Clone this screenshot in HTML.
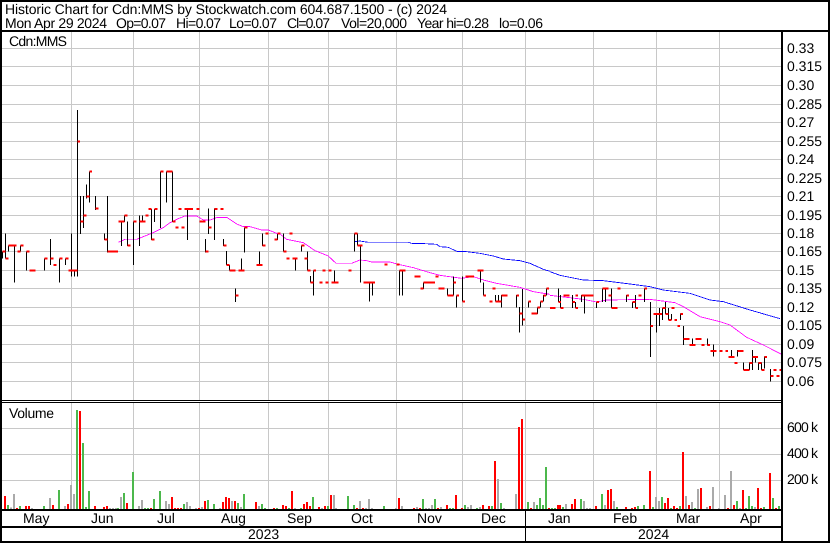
<!DOCTYPE html>
<html>
<head>
<meta charset="utf-8">
<style>
html,body{margin:0;padding:0;background:#fff;width:830px;height:543px;overflow:hidden}
svg{display:block}
text{font-family:"Liberation Sans",Arial,sans-serif;font-size:14px;fill:#000}
</style>
</head>
<body>
<svg width="830" height="543" viewBox="0 0 830 543" xmlns="http://www.w3.org/2000/svg" shape-rendering="crispEdges">
<rect width="830" height="543" fill="#fff"/>
<!-- grid -->
<path fill="none" stroke="#c8c8c8" stroke-width="1" d="M71.5 32V400M133.5 32V400M199.5 32V400M268.5 32V400M328.5 32V400M396.5 32V400M462.5 32V400M525.5 32V400M593.5 32V400M656.5 32V400M719.5 32V400M71.5 403V509M133.5 403V509M199.5 403V509M268.5 403V509M328.5 403V509M396.5 403V509M462.5 403V509M525.5 403V509M593.5 403V509M656.5 403V509M719.5 403V509M2 48.5H781M2 66.5H781M2 85.5H781M2 104.5H781M2 122.5H781M2 141.5H781M2 159.5H781M2 178.5H781M2 196.5H781M2 215.5H781M2 233.5H781M2 251.5H781M2 270.5H781M2 288.5H781M2 307.5H781M2 325.5H781M2 344.5H781M2 362.5H781M2 381.5H781M2 428.5H781M2 454.5H781M2 480.5H781"/>

<!-- volume bars, zoom 1 -->
<g transform="translate(0,400) scale(.333333)" fill="none" stroke-width="6">
<path stroke="#ff0000" d="M15 288V328M51 324V328M78 318V328M87 318V328M159 315V328M204 312V328M240 33V328M285 318V328M312 321V328M321 318V328M381 309V328M453 324V328M516 291V328M525 324V328M534 324V328M543 324V328M597 324V328M615 303V328M669 306V328M678 291V328M687 294V328M705 303V328M768 306V328M822 324V328"/>
<path stroke="#4cb84c" d="M24 315V328M60 318V328M132 318V328M177 270V328M231 30V328M249 129V328M258 321V328M267 273V328M354 324V328M372 279V328M399 216V328M435 324V328M444 324V328M462 297V328M480 273V328M552 312V328M624 300V328M642 312V328M714 309V328M732 282V328M786 312V328M795 324V328M831 324V328"/>
<path stroke="#aaaaaa" d="M33 323V328M42 282V328M96 324V328M150 294V328M195 318V328M213 255V328M222 282V328M330 324V328M339 324V328M348 324V328M363 291V328M417 318V328M426 300V328M498 303V328M507 312V328M561 306V328M570 318V328M588 324V328M606 321V328M660 324V328M696 303V328M723 321V328M777 318V328"/>
</g>
<!-- volume bars, zoom 2 -->
<g transform="translate(280,400) scale(.333333)" fill="none" stroke-width="6">
<path stroke="#ff0000" d="M9 315V328M18 318V328M36 273V328M72 312V328M81 306V328M90 318V328M117 321V328M135 318V328M153 285V328M231 324V328M249 324V328M357 294V328M402 324V328M420 324V328M474 324V328M501 315V328M528 285V328M546 324V328M609 315V328M627 318V328M645 183V328M717 81V328M726 57V328M753 324V328M807 324V328M834 315V328"/>
<path stroke="#4cb84c" d="M27 324V328M63 324V328M99 291V328M144 318V328M204 288V328M222 315V328M312 318V328M429 297V328M465 297V328M510 324V328M519 324V328M555 315V328M591 324V328M636 318V328M663 309V328M744 306V328M771 315V328M780 294V328M789 315V328M798 201V328M816 324V328M825 324V328"/>
<path stroke="#aaaaaa" d="M45 324V328M126 324V328M162 285V328M168 324V328M240 303V328M258 324V328M267 297V328M276 324V328M348 324V328M366 318V328M411 321V328M438 324V328M447 324V328M456 315V328M483 321V328M564 321V328M573 315V328M600 321V328M654 237V328M672 324V328M708 282V328M762 306V328"/>
</g>
<!-- volume bars, zoom 3 -->
<g transform="translate(550,400) scale(.333333)" fill="none" stroke-width="6">
<path stroke="#ff0000" d="M30 315V328M66 312V328M75 297V328M138 318V328M174 270V328M183 267V328M228 321V328M246 324V328M255 321V328M300 213V328M345 309V328M354 294V328M372 318V328M381 324V328M399 156V328M417 315V328M453 264V328M480 318V328M534 324V328M552 315V328M579 270V328M624 264V328M633 324V328M660 219V328M678 324V328"/>
<path stroke="#4cb84c" d="M39 321V328M93 297V328M156 282V328M201 321V328M264 318V328M282 315V328M309 321V328M336 291V328M363 324V328M390 318V328M435 324V328M561 303V328M588 324V328M597 288V328M606 318V328M642 321V328M669 294V328M687 318V328"/>
<path stroke="#aaaaaa" d="M48 312V328M102 303V328M111 324V328M120 324V328M165 315V328M192 303V328M318 291V328M327 303V328M408 288V328M426 306V328M444 267V328M471 321V328M489 261V328M507 324V328M525 285V328M543 213V328M570 324V328M615 321V328"/>
</g>

<!-- price section 1 -->
<g transform="translate(0,130) scale(.333333)" fill="none">
<path stroke="#ff00ff" stroke-width="2.5" d="M355 337L375 328L410 328L430 320L460 308L490 293L510 278L530 268L555 258L590 258L610 270L630 270L650 263L680 262L710 282L730 290L750 290L785 300L805 300L835 312"/>
<path stroke="#000" stroke-width="3" d="M7.5 364V386M16.5 310V385M25.5 347V365M43.5 347V458M61.5 347V365M79.5 365V422M133.5 385V422M151.5 327V405M178.5 385V458M196.5 385V405M214.5 310V440M223.5 422V440M232.5 -60V440M241.5 198V312M250.5 198V294M259.5 163V205M268.5 125V218M286.5 198V240M313.5 310V330M322.5 198V367M364.5 275V348M373.5 256V276M382.5 274V348M400.5 275V405M418.5 256V348M427.5 256V276M454.5 237V330M463.5 237V276M481.5 125V294M499.5 125V218M517.5 125V276M562.5 237V330M616.5 327V367M625.5 235V312M643.5 235V330M670.5 327V348M679.5 363V405M688.5 405V422M706.5 475V516M724.5 385V422M733.5 292V367M778.5 364V405M787.5 310V348M832.5 312V330"/>
<path stroke="#ff0000" stroke-width="6" d="M8 365h9M16 386h9M25 347h24M52 365h9M61 347h9M80 365h9M88 422h18M133 385h9M152 385h9M160 405h9M178 385h9M196 385h9M205 422h27M233 35h7M242 275h9M250 257h9M259 200h9M268 125h8M286 236h9M313 329h9M322 365h32M355 275h18M373 257h9M382 347h9M400 275h9M418 275h18M436 257h9M445 237h10M454 329h9M463 237h9M481 125h9M499 125h18M517 275h9M526 293h9M535 237h9M544 293h9M553 237h26M589 237h9M598 275h18M616 365h9M625 293h9M643 237h9M661 237h9M670 347h9M679 405h9M688 422h18M706 497h9M715 422h18M733 293h9M769 405h18M787 347h9M796 311h9M823 329h9M832 311h9"/>
</g>
<!-- price section 2 -->
<g transform="translate(280,200) scale(.333333)" fill="none">
<path stroke="#ff00ff" stroke-width="2.5" d="M0 102L20 118L70 128L105 152L145 168L168 190L215 190L240 180L260 182L275 186L330 186L355 193L400 203L450 218L480 226L545 235L580 230L610 240L650 250L720 262L760 275L810 283"/>
<path stroke="#0000ff" stroke-width="2.5" d="M223 125L240 123L265 127L385 127L395 130L435 131L470 133L480 140L505 142L530 154L560 155L600 160L640 168L670 177L720 182L750 190L790 208L810 214"/>
<path stroke="#000" stroke-width="3" d="M10.5 100V155M64.5 137V155M82.5 155V212M46.5 176V212M91.5 228V248M100.5 212V287M163.5 212V248M223.5 100V155M232.5 100V137M241.5 137V248M268.5 248V305M277.5 248V287M358.5 212V287M367.5 212V287M430.5 248V267M502.5 265V287M520.5 230V287M529.5 287V323M547.5 230V305M601.5 212V248M610.5 248V287M646.5 285V305M655.5 285V305M664.5 285V323M709.5 285V323M718.5 321V398M727.5 267V377M745.5 305V323M772.5 323V342M781.5 305V323M790.5 285V305M799.5 265V287"/>
<path stroke="#ff0000" stroke-width="6" d="M28 101h9M10 155h9M19 176h9M37 176h16M73 176h9M64 137h9M82 212h9M100 212h8M127 212h9M145 212h9M91 248h9M118 248h9M136 248h9M154 248h22M205 212h9M223 101h9M232 137h16M250 248h35M313 194h9M349 194h9M358 212h18M403 230h18M421 266h9M430 248h35M466 230h9M475 266h18M502 287h18M520 248h8M529 287h8M547 305h8M556 230h26M592 212h18M610 287h8M628 305h9M637 266h9M646 305h18M664 287h18M709 287h8M718 341h9M727 359h8M745 305h8M754 341h18M772 323h8M781 305h8M790 287h8M799 266h8"/>
</g>
<!-- price section 3 -->
<g transform="translate(550,260) scale(.333333)" fill="none">
<path stroke="#ff00ff" stroke-width="2.5" d="M0 106L50 112L100 118L140 126L170 120L300 118L330 122L375 128L400 140L450 170L510 185L540 195L590 232L640 255L695 283"/>
<path stroke="#0000ff" stroke-width="2.5" d="M0 35L30 46L100 60L160 62L240 72L300 80L340 90L420 100L480 120L520 125L600 150L690 176"/>
<path stroke="#000" stroke-width="3" d="M25.5 85V126M31.5 105V144M67.5 105V144M76.5 126V144M94.5 105V126M103.5 105V160M139.5 126V144M157.5 85V126M166.5 85V126M184.5 85V144M229.5 105V126M247.5 126V144M256.5 105V144M283.5 85V126M301.5 126V291M319.5 160V218M328.5 144V198M337.5 144V180M346.5 126V162M355.5 144V180M364.5 162V180M391.5 160V180M400.5 198V255M427.5 235V257M472.5 235V257M490.5 253V290M544.5 270V290M562.5 270V290M580.5 307V330M598.5 307V330M607.5 270V330M616.5 290V308M625.5 307V330M634.5 307V330M643.5 290V326M661.5 327V365"/>
<path stroke="#ff0000" stroke-width="6" d="M0 144h16M25 126h8M32 144h8M40 107h18M67 126h8M76 144h8M76 107h8M94 107h36M139 126h8M157 86h18M175 107h9M184 144h18M202 86h9M229 107h8M247 126h9M256 144h8M265 107h9M283 86h8M301 198h8M310 162h26M337 144h9M346 162h9M355 180h9M364 144h9M373 180h8M391 162h8M382 198h8M400 237h18M418 255h18M436 237h18M454 255h9M472 255h8M481 273h18M508 273h9M526 273h8M535 291h18M553 309h9M562 273h18M580 330h18M598 309h9M607 291h9M616 291h8M625 309h9M634 330h9M643 291h8M661 348h9M670 330h9M679 348h9M688 330h9"/>
</g>

<!-- frame -->
<path fill="#000" d="M0 0H830V2H0ZM0 30H830V32H0ZM0 0H2V543H0ZM828 0H830V543H828ZM781 30H783V543H781ZM0 400H781V401H0ZM0 402H781V403H0ZM0 509H781V511H0ZM0 526H781V528H0ZM0 541H830V543H0ZM525 510H526V541H525Z"/>

<!-- header -->
<g text-rendering="geometricPrecision">
<text x="5" y="14" textLength="442" lengthAdjust="spacing">Historic Chart for Cdn:MMS by Stockwatch.com 604.687.1500 - (c) 2024</text>
<text x="5" y="28" textLength="102" lengthAdjust="spacing">Mon Apr 29 2024</text>
<text x="116" y="28" textLength="50" lengthAdjust="spacing">Op=0.07</text>
<text x="176" y="28" textLength="45" lengthAdjust="spacing">Hi=0.07</text>
<text x="229" y="28" textLength="48" lengthAdjust="spacing">Lo=0.07</text>
<text x="287" y="28" textLength="43" lengthAdjust="spacing">Cl=0.07</text>
<text x="341" y="28" textLength="66" lengthAdjust="spacing">Vol=20,000</text>
<text x="417" y="28" textLength="72" lengthAdjust="spacing">Year hi=0.28</text>
<text x="499" y="28" textLength="44" lengthAdjust="spacing">lo=0.06</text>

<text x="9" y="46" textLength="58" lengthAdjust="spacing">Cdn:MMS</text>
<text x="9" y="418" textLength="45" lengthAdjust="spacing">Volume</text>

<text x="787" y="53">0.33</text>
<text x="787" y="71">0.315</text>
<text x="787" y="90">0.30</text>
<text x="787" y="109">0.285</text>
<text x="787" y="127">0.27</text>
<text x="787" y="146">0.255</text>
<text x="787" y="164">0.24</text>
<text x="787" y="183">0.225</text>
<text x="787" y="201">0.21</text>
<text x="787" y="220">0.195</text>
<text x="787" y="238">0.18</text>
<text x="787" y="256">0.165</text>
<text x="787" y="275">0.15</text>
<text x="787" y="293">0.135</text>
<text x="787" y="312">0.12</text>
<text x="787" y="330">0.105</text>
<text x="787" y="349">0.09</text>
<text x="787" y="367">0.075</text>
<text x="787" y="386">0.06</text>

<text x="787" y="432" textLength="31" lengthAdjust="spacing">600 k</text>
<text x="787" y="458" textLength="31" lengthAdjust="spacing">400 k</text>
<text x="787" y="484" textLength="31" lengthAdjust="spacing">200 k</text>

<text x="23" y="523">May</text>
<text x="91" y="523">Jun</text>
<text x="157" y="523">Jul</text>
<text x="221" y="523">Aug</text>
<text x="287" y="523">Sep</text>
<text x="351" y="523">Oct</text>
<text x="417" y="523">Nov</text>
<text x="481" y="523">Dec</text>
<text x="548" y="523">Jan</text>
<text x="613" y="523">Feb</text>
<text x="676" y="523">Mar</text>
<text x="740" y="523">Apr</text>

<text x="248" y="539">2023</text>
<text x="638" y="539">2024</text>
</g>
</svg>
</body>
</html>
